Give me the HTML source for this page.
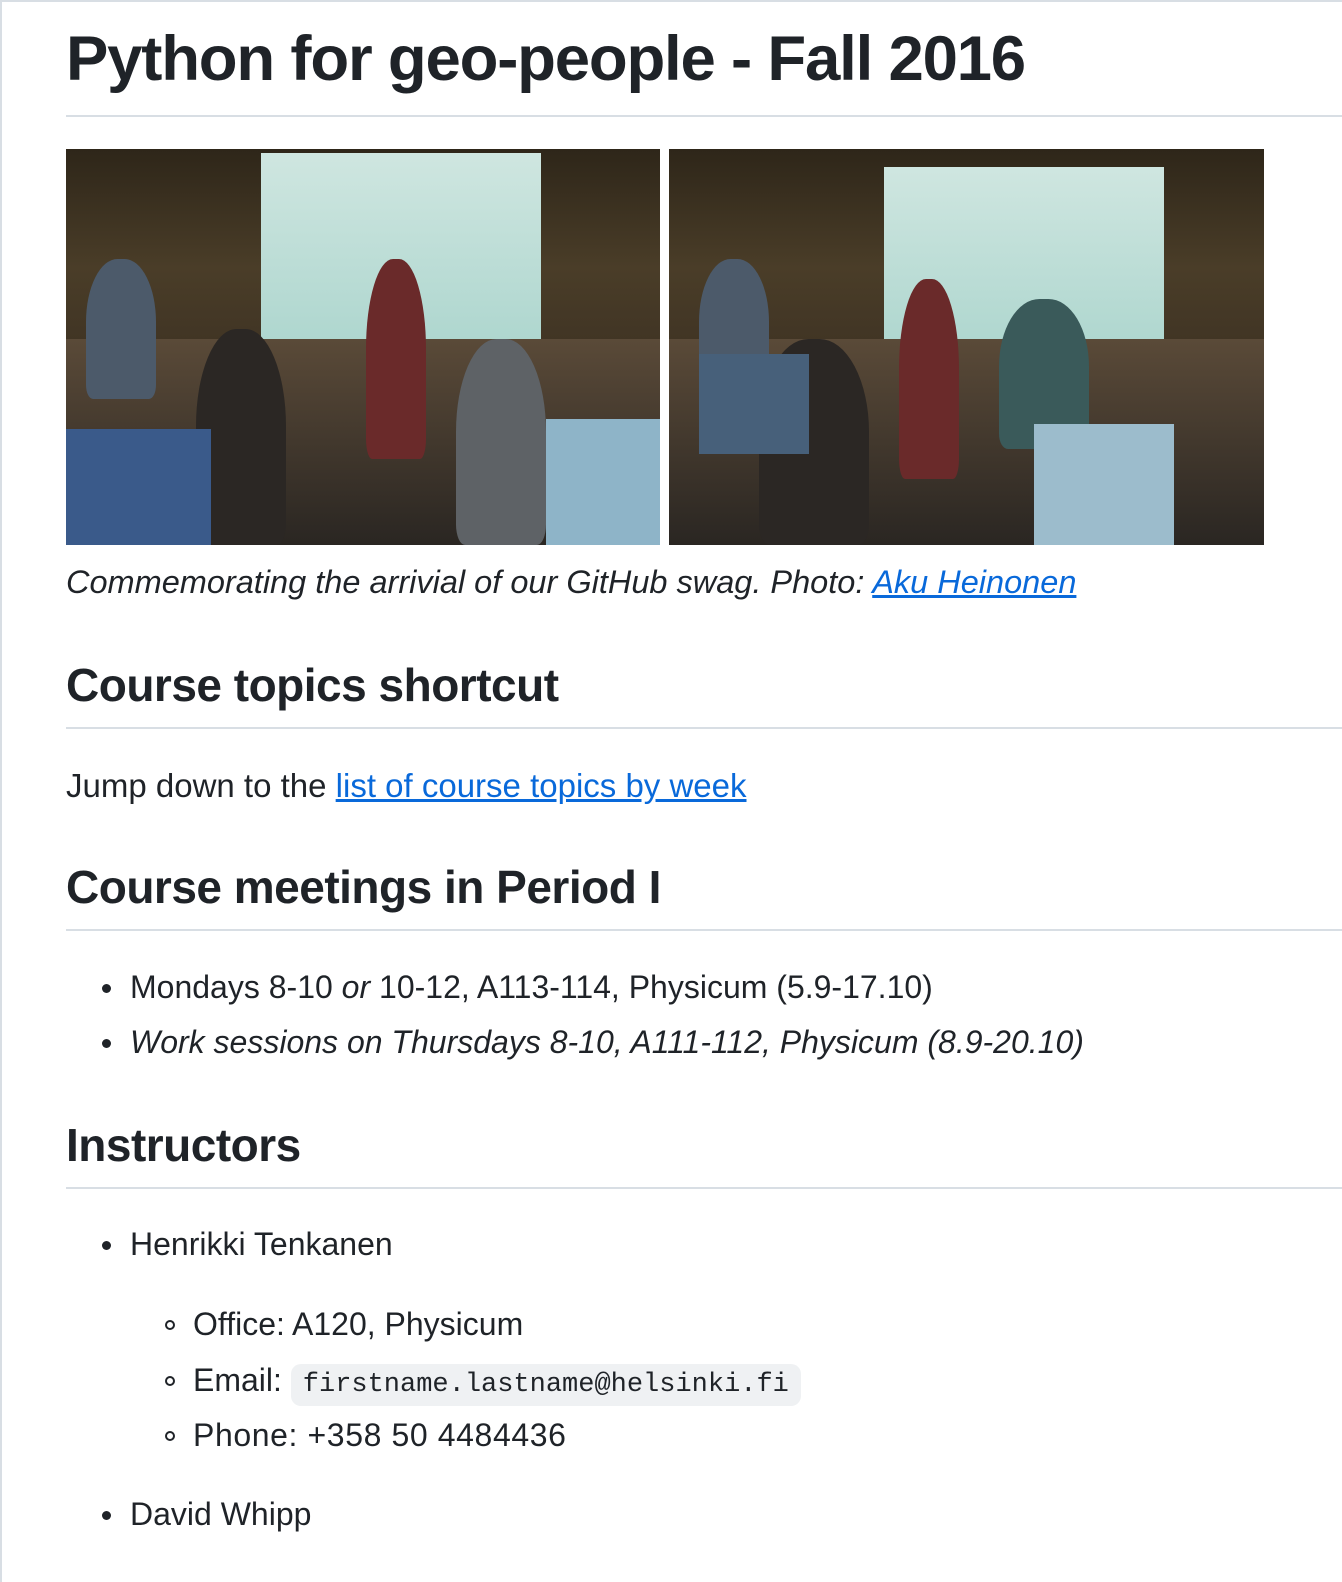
<!DOCTYPE html>
<html><head><meta charset="utf-8"><style>
html,body{margin:0;padding:0;background:#fff;overflow:hidden}
body{width:1342px;height:1582px;position:relative;font-family:"Liberation Sans",sans-serif;color:#1f2328}
.a{position:absolute;white-space:nowrap;line-height:1}
.hr{position:absolute;left:66px;right:0;height:2px;background:#d8dee4}
h1,h2{margin:0;font-weight:bold}
a{color:#0969da;text-decoration:underline}
.photo{position:absolute;top:149px;height:396px;overflow:hidden;background:linear-gradient(180deg,#2e2619 0%,#4a3d28 30%,#3b3022 60%,#22201c 100%)}
.scr{position:absolute;background:linear-gradient(180deg,#cfe6e0,#a9d4cc);}
.code{font-family:"Liberation Mono",monospace;font-size:27px;background:#eff1f3;border-radius:10px;padding:6px 12px}
.dot{position:absolute;width:9px;height:9px;border-radius:50%;background:#1f2328}
.circ{position:absolute;width:10px;height:10px;border-radius:50%;border:2px solid #1f2328;box-sizing:border-box}
.p{position:absolute;border-radius:45% 45% 10% 10%}
</style></head><body>
<div style="position:absolute;left:0;top:0;width:1342px;height:2px;background:#d8dee4"></div>
<div style="position:absolute;left:0;top:0;width:2px;height:1582px;background:#d8dee4"></div>

<h1 class="a" style="left:66px;top:28px;font-size:63.5px;letter-spacing:-1.2px">Python for geo-people - Fall 2016</h1>
<div class="hr" style="top:115px"></div>

<div class="photo" style="left:66px;width:594px">
 <div class="scr" style="left:195px;top:4px;width:280px;height:220px"></div>
 <div style="position:absolute;left:0;top:190px;width:594px;height:206px;background:linear-gradient(180deg,#5a4a38,#2a2622)"></div>
 <div class="p" style="left:20px;top:110px;width:70px;height:140px;background:#4c5a6a"></div>
 <div class="p" style="left:130px;top:180px;width:90px;height:216px;background:#2b2724"></div>
 <div class="p" style="left:300px;top:110px;width:60px;height:200px;background:#6a2a2a"></div>
 <div class="p" style="left:390px;top:190px;width:90px;height:206px;background:#5e6266"></div>
 <div style="position:absolute;left:0;top:280px;width:145px;height:116px;background:#3a5a8a"></div>
 <div style="position:absolute;left:480px;top:270px;width:114px;height:126px;background:#8eb4c8"></div>
</div>
<div class="photo" style="left:669px;width:595px">
 <div class="scr" style="left:215px;top:18px;width:280px;height:210px"></div>
 <div style="position:absolute;left:0;top:190px;width:595px;height:206px;background:linear-gradient(180deg,#5a4a38,#2a2622)"></div>
 <div class="p" style="left:30px;top:110px;width:70px;height:140px;background:#4c5a6a"></div>
 <div class="p" style="left:90px;top:190px;width:110px;height:206px;background:#2b2724"></div>
 <div class="p" style="left:230px;top:130px;width:60px;height:200px;background:#6a2a2a"></div>
 <div class="p" style="left:330px;top:150px;width:90px;height:150px;background:#3a5a5a"></div>
 <div style="position:absolute;left:365px;top:275px;width:140px;height:121px;background:#9cbccc"></div>
 <div style="position:absolute;left:30px;top:205px;width:110px;height:100px;background:#47607a"></div>
</div>

<div class="a" style="left:66px;top:566px;font-size:32.5px;font-style:italic">Commemorating the arrivial of our GitHub swag. Photo: <a>Aku Heinonen</a></div>

<h2 class="a" style="left:66px;top:662px;font-size:46px;letter-spacing:-0.5px">Course topics shortcut</h2>
<div class="hr" style="top:727px"></div>
<div class="a" style="left:66px;top:769px;font-size:33px">Jump down to the <a>list of course topics by week</a></div>

<h2 class="a" style="left:66px;top:864px;font-size:46px;letter-spacing:-0.5px">Course meetings in Period I</h2>
<div class="hr" style="top:929px"></div>
<div class="dot" style="left:102px;top:984px"></div>
<div class="a" style="left:130px;top:971px;font-size:32px">Mondays 8-10 <i>or</i> 10-12, A113-114, Physicum (5.9-17.10)</div>
<div class="dot" style="left:102px;top:1039px"></div>
<div class="a" style="left:130px;top:1026px;font-size:32px;font-style:italic">Work sessions on Thursdays 8-10, A111-112, Physicum (8.9-20.10)</div>

<h2 class="a" style="left:66px;top:1122px;font-size:46px;letter-spacing:-0.5px">Instructors</h2>
<div class="hr" style="top:1187px"></div>
<div class="dot" style="left:102px;top:1241px"></div>
<div class="a" style="left:130px;top:1228px;font-size:32px">Henrikki Tenkanen</div>
<div class="circ" style="left:165px;top:1320px"></div>
<div class="a" style="left:193px;top:1308px;font-size:32px">Office: A120, Physicum</div>
<div class="circ" style="left:165px;top:1376px"></div>
<div class="a" style="left:193px;top:1364px;font-size:32px">Email: <span class="code">firstname.lastname@helsinki.fi</span></div>
<div class="circ" style="left:165px;top:1431px"></div>
<div class="a" style="left:193px;top:1419px;font-size:32px;letter-spacing:0.6px">Phone: +358 50 4484436</div>
<div class="dot" style="left:102px;top:1511px"></div>
<div class="a" style="left:130px;top:1498px;font-size:32px">David Whipp</div>
</body></html>
